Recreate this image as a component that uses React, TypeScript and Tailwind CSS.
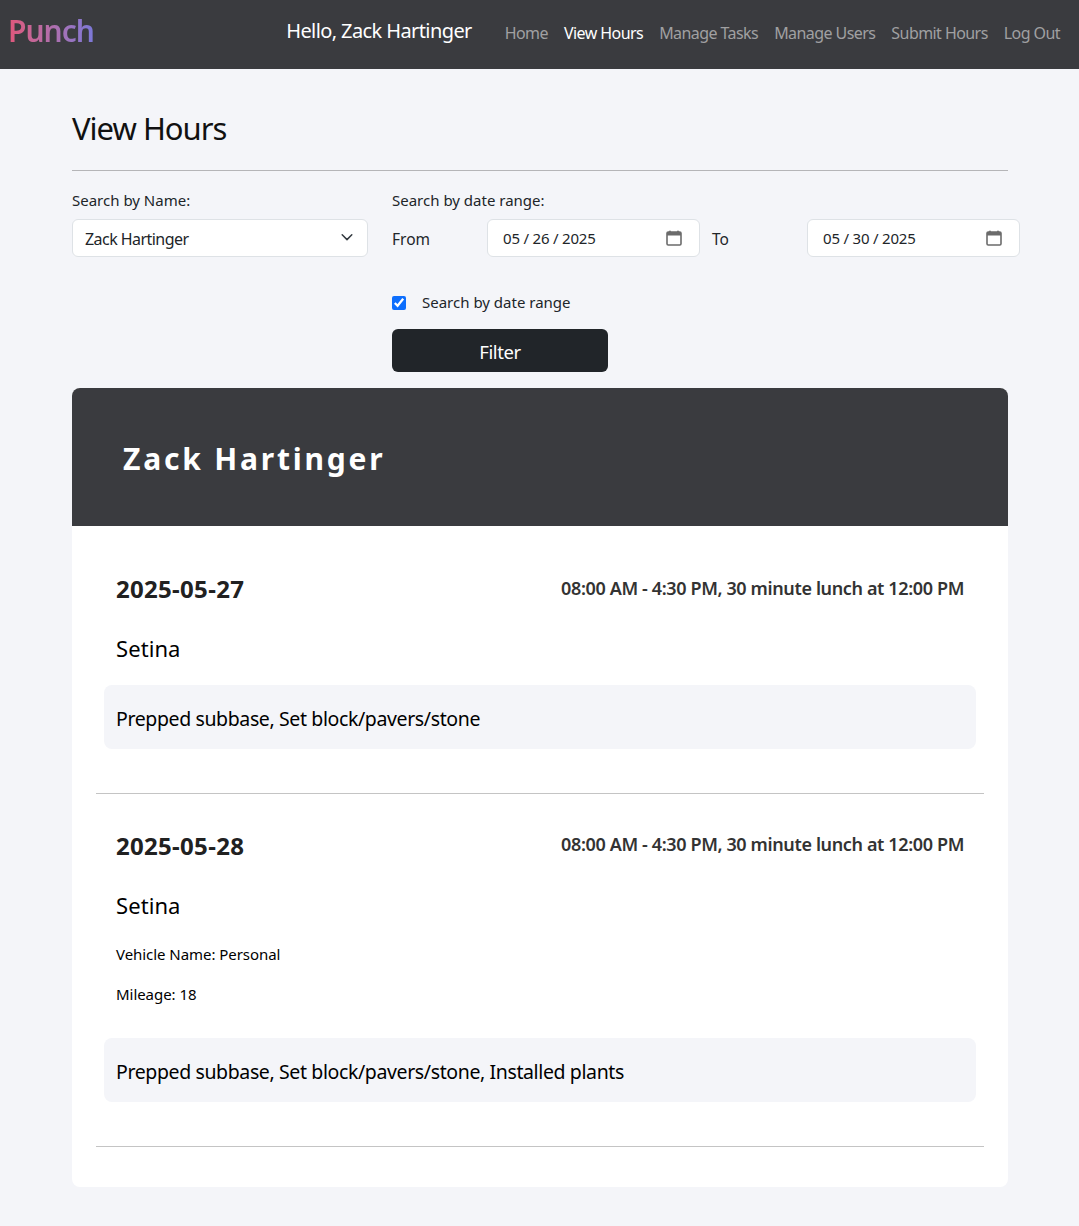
import React from "react";

function CalendarIcon() {
  return (
    <svg width="16" height="16" viewBox="0 0 16 16" fill="none" className="shrink-0">
      <path d="M1 3.2C1 2.500 1.500 2 2.200 2h11.600c.7 0 1.200.5 1.200 1.200v10.600c0 .7-.5 1.200-1.200 1.200H2.200c-.7 0-1.200-.5-1.200-1.200V3.200z" stroke="#6b6b6b" strokeWidth="1.600" />
      <path d="M1 2.800C1 2.300 1.500 2 2 2h12c.5 0 1 .3 1 .8V5.500H1V2.800z" fill="#6b6b6b" />
      <rect x="3.200" y="0.500" width="1.600" height="2.500" rx="0.700" fill="#6b6b6b" />
      <rect x="11.200" y="0.500" width="1.600" height="2.500" rx="0.700" fill="#6b6b6b" />
    </svg>
  );
}

function DateBox({ value }: { value: string }) {
  return (
    <div className="flex h-[38px] w-[213px] shrink-0 items-center justify-between rounded-md border border-[#dee2e6] bg-white pl-[15px] pr-[17px] text-[15px] tracking-[-0.2px] text-[#212529]">
      <span className="pt-[1px]">{value}</span>
      <CalendarIcon />
    </div>
  );
}

function Entry({ date, vehicle }: { date: string; vehicle?: boolean }) {
  return (
    <section className="mx-6 border-b border-[#c4c4c4] pb-11">
      <div className="flex items-start justify-between px-5">
        <h2 className="text-[24px] leading-[36px] font-bold tracking-[0.3px] text-[#212121]">{date}</h2>
        <p className={`${vehicle ? "mt-[-2px]" : "mt-[-1px]"} text-[18px] leading-[36px] font-semibold tracking-[-0.37px] text-[#333333]`}>
          08:00 AM - 4:30 PM, 30 minute lunch at 12:00 PM
        </p>
      </div>
      <h3 className="mt-[26px] px-5 text-[22px] leading-[30px] tracking-[0.07px] text-black">Setina</h3>
      {vehicle && (
        <div className="mt-[23px] px-5 text-[15px] leading-[22px] tracking-[-0.05px] text-black">
          <p>Vehicle Name: Personal</p>
          <p className="mt-[18px]">Mileage: 18</p>
        </div>
      )}
      <div className={`${vehicle ? "mt-[33px] pt-[3px]" : "mt-[22px] pt-1"} mx-2 flex h-16 items-center rounded-lg bg-[#f4f5f9] px-3 text-[19.5px] tracking-[-0.38px] text-black`}>
        {vehicle ? "Prepped subbase, Set block/pavers/stone, Installed plants" : "Prepped subbase, Set block/pavers/stone"}
      </div>
    </section>
  );
}

export default function App() {
  return (
    <div className="min-h-[1226px] bg-[#f4f5f9] font-['Noto_Sans','Open_Sans',sans-serif]">
      <header className="flex h-[69px] items-center justify-between bg-[#3a3b3f] pl-[8px] pr-[19px]">
        <span className="mt-[-7px] bg-gradient-to-r from-[#e0567a] to-[#7b78d8] bg-clip-text text-[30px] leading-[38px] font-semibold tracking-[-1px] text-transparent">
          Punch
        </span>
        <div className="flex items-center">
          <span className="mt-[-8px] mr-[33px] text-[20px] leading-[30px] tracking-[-0.6px] text-white">Hello, Zack Hartinger</span>
          <nav className="mt-[-4px] flex gap-4 text-[16px] leading-6 tracking-[-0.57px] text-[#a0a0a2]">
            <a>Home</a>
            <a className="text-white">View Hours</a>
            <a>Manage Tasks</a>
            <a>Manage Users</a>
            <a>Submit Hours</a>
            <a>Log Out</a>
          </nav>
        </div>
      </header>

      <main className="mx-[72px] w-[936px] pt-[38px]">
        <h1 className="text-[31px] leading-[42px] tracking-[-1px] text-[#111111]">View Hours</h1>
        <hr className="mt-[21px] border-t border-[#b5b5b8]" />

        <div className="mt-[18px] flex gap-6 text-[15px] text-[#212529]">
          <div className="w-[296px] shrink-0">
            <label className="block leading-[22px]">Search by Name:</label>
            <div className="mt-[8px] flex h-[38px] items-center justify-between rounded-md border border-[#dee2e6] bg-white pl-3 pr-[13px] text-[16px] tracking-[-0.55px]">
              <span className="pt-[1px]">Zack Hartinger</span>
              <svg width="14" height="14" viewBox="0 0 16 16" fill="none" className="mt-[-2px]">
                <path d="M2.500 5.500L8 11l5.500-5.500" stroke="#343a40" strokeWidth="1.700" strokeLinecap="round" strokeLinejoin="round" />
              </svg>
            </div>
          </div>
          <div className="w-[628px] shrink-0">
            <label className="block leading-[22px]">Search by date range:</label>
            <div className="mt-[8px] flex items-center">
              <span className="w-[95px] shrink-0 pt-[3px] text-[15.5px]">From</span>
              <DateBox value="05 / 26 / 2025" />
              <span className="ml-3 w-[95px] shrink-0 pt-[3px] text-[15.5px]">To</span>
              <DateBox value="05 / 30 / 2025" />
            </div>
            <div className="mt-[35px] flex items-center">
              <input type="checkbox" defaultChecked readOnly className="h-[14px] w-[14px] accent-[#0d6efd]" />
              <span className="ml-4 mt-[-1px] mb-[1px] leading-[22px]">Search by date range</span>
            </div>
            <button className="mt-[15px] block h-[43px] w-[216px] rounded-md bg-[#212529] pt-[3px] text-[18.5px] tracking-[-0.4px] text-white">
              Filter
            </button>
          </div>
        </div>

        <div className="mt-[16px] overflow-hidden rounded-lg bg-white pb-10">
          <div className="flex h-[138px] items-center bg-[#3a3b3f] pl-[51px]">
            <h2 className="mt-[3px] text-[30px] leading-9 font-bold tracking-[2.8px] text-white">Zack Hartinger</h2>
          </div>
          <div className="flex flex-col gap-[34px] pt-[45px]">
            <Entry date="2025-05-27" />
            <Entry date="2025-05-28" vehicle />
          </div>
        </div>
      </main>
    </div>
  );
}
